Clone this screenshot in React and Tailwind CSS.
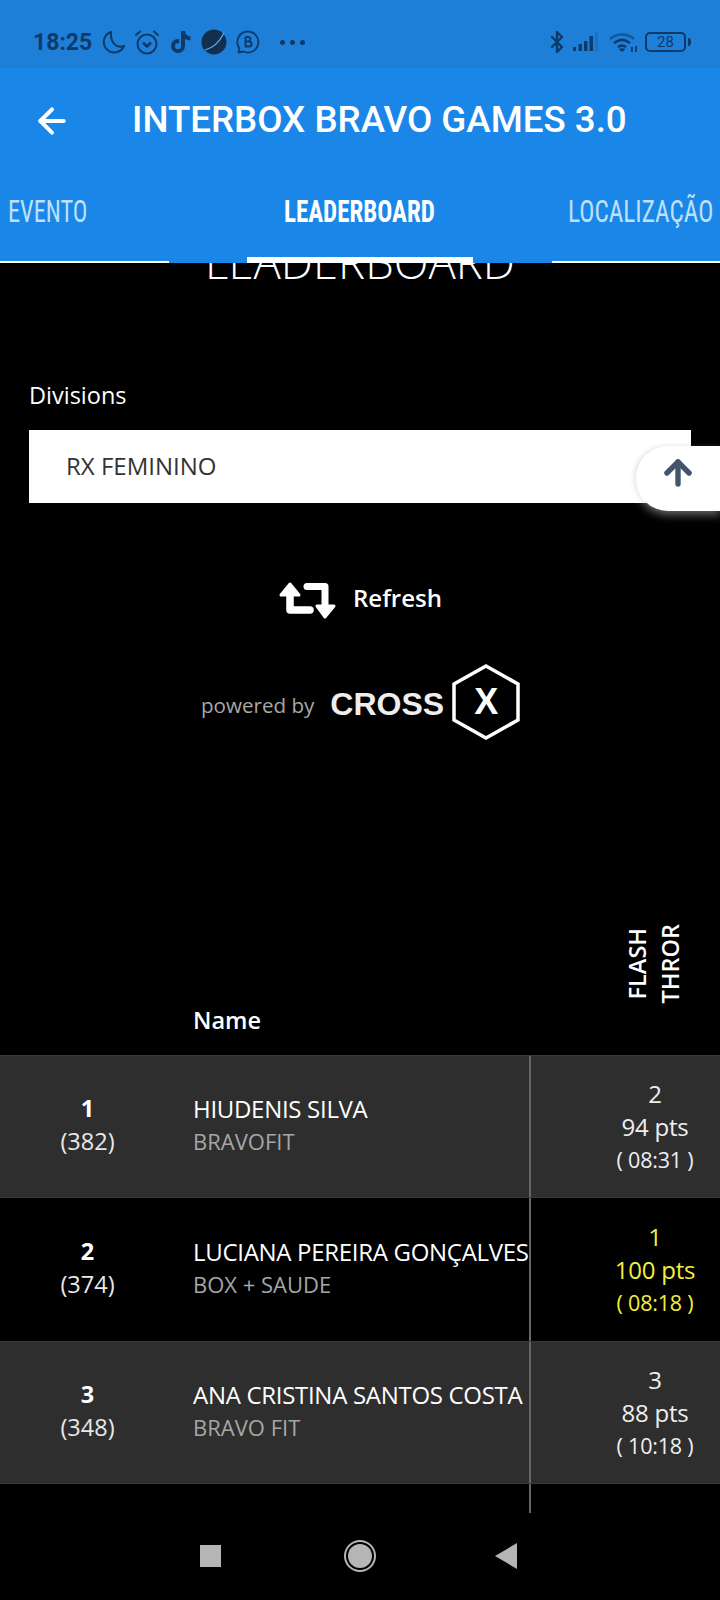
import React from 'react';
import { ArrowLeft, ArrowUp, Bluetooth } from 'lucide-react';

const openSans = { fontFamily: '"Open Sans", sans-serif' };

const rows = [
  { pos: 1, total: '(382)', name: 'HIUDENIS SILVA', box: 'BRAVOFIT', rank: 2, pts: '94 pts', time: '( 08:31 )', shaded: true },
  { pos: 2, total: '(374)', name: 'LUCIANA PEREIRA GONÇALVES', box: 'BOX + SAUDE', rank: 1, pts: '100 pts', time: '( 08:18 )', gold: true },
  { pos: 3, total: '(348)', name: 'ANA CRISTINA SANTOS COSTA', box: 'BRAVO FIT', rank: 3, pts: '88 pts', time: '( 10:18 )', shaded: true },
];

const StatusBar = () => (
  <div className="flex h-[68px] items-center justify-between bg-[#1e7fd9] pl-[33px] pr-[29px] pt-[16px] text-[#0f3a68]">
    <div className="flex items-center">
      <span className="text-[23px] font-bold font-['Roboto',sans-serif] leading-none">18:25</span>
      {/* moon */}
      <svg width="24" height="24" viewBox="0 0 24 24" className="ml-[10px]" fill="none" stroke="currentColor" strokeWidth="2">
        <path d="M9 2a10.5 10.5 0 1 0 13 14c-6 2.5-14-2-13-14z" strokeLinejoin="round" />
      </svg>
      {/* alarm */}
      <svg width="26" height="26" viewBox="0 0 26 26" className="ml-[8px]" fill="none" stroke="currentColor" strokeWidth="2">
        <circle cx="13" cy="15" r="9.5" />
        <path d="M2 6l4-3.5M24 6l-4-3.5" strokeLinecap="round" />
        <path d="M9 13.5l4 4 4-4" strokeWidth="2.6" strokeLinejoin="round" />
      </svg>
      {/* tiktok */}
      <svg width="22" height="24" viewBox="0 0 22 24" className="ml-[10px]" fill="currentColor">
        <path d="M11 1h4c.2 3 2.2 5 5.5 5.5v4c-2.2 0-4-.6-5.5-1.7V16a7 7 0 1 1-7-7h1.2v4.2H8a3 3 0 1 0 3 3z" />
      </svg>
      {/* planet */}
      <svg width="26" height="26" viewBox="0 0 26 26" className="ml-[9px]">
        <circle cx="13" cy="13" r="12.5" fill="#122f4f" />
        <path d="M4 21C12 19 19 12 23 4" stroke="#6ba9e0" strokeWidth="1.2" fill="none" />
      </svg>
      {/* business whatsapp */}
      <svg width="24" height="24" viewBox="0 0 24 24" className="ml-[9px]" fill="none" stroke="currentColor" strokeWidth="1.8">
        <path d="M12 1.5a10.5 10.5 0 1 1-4.6 20L2.5 22.5l1-4.2A10.5 10.5 0 0 1 12 1.5z" strokeLinejoin="round" />
        <path d="M9.5 7v9.5h3.6a2.5 2.5 0 0 0 0-5H9.5m0 0h3.2a2.3 2.3 0 0 0 0-4.5H9.5" strokeWidth="2" />
      </svg>
      <div className="ml-[20px] flex gap-[5px]">
        <span className="h-[5px] w-[5px] rounded-full bg-[#0f3a68]" />
        <span className="h-[5px] w-[5px] rounded-full bg-[#0f3a68]" />
        <span className="h-[5px] w-[5px] rounded-full bg-[#0f3a68]" />
      </div>
    </div>
    <div className="flex items-center">
      <Bluetooth size={24} strokeWidth={2.4} />
      <svg width="28" height="22" viewBox="0 0 28 22" className="ml-[3px]" fill="currentColor">
        <rect x="1" y="16" width="3" height="4" />
        <rect x="6.5" y="13" width="3.5" height="7" />
        <rect x="12" y="10" width="3.5" height="10" />
        <rect x="17.5" y="5" width="3.5" height="15" />
        <rect x="23" y="1" width="3" height="19" opacity="0.2" />
      </svg>
      <svg width="30" height="24" viewBox="0 0 30 24" className="ml-[8px]" fill="none" stroke="currentColor" strokeWidth="2.6">
        <path d="M2 9c7-6 17-6 24 0" opacity="0.6" />
        <path d="M6 13c5-4 11-4 16 0" />
        <path d="M10 17c3-2 5-2 8 0" />
        <path d="M14 22l-3.5-3c2-1 5-1 7 0z" fill="currentColor" stroke="none" />
        <path d="M24 17v5M28 16v6" strokeWidth="1.8" />
      </svg>
      <div className="ml-[7px] flex h-[20px] w-[41px] items-center justify-center rounded-[5px] border-2 border-[#0f3a68] font-['Roboto',sans-serif] text-[15px] leading-none">28</div>
      <div className="ml-[2px] h-[8px] w-[3px] rounded-r-sm bg-[#0f3a68]" />
    </div>
  </div>
);

const Tabs = () => (
  <div className="relative h-[82px] font-['Liberation_Sans_Narrow','Roboto_Condensed',sans-serif] text-[32px] leading-none">
    <span className="absolute left-[8px] top-[14px] origin-left scale-x-[0.76] text-[#bfe0fa]">EVENTO</span>
    <span className="absolute left-[284px] top-[14px] origin-left scale-x-[0.78] font-bold text-white">LEADERBOARD</span>
    <span className="absolute left-[568px] top-[14px] origin-left scale-x-[0.79] whitespace-nowrap text-[#bfe0fa]">LOCALIZAÇÃO</span>
    <div className="absolute bottom-0 left-[247px] h-[6px] w-[226px] bg-white" />
  </div>
);

const Header = () => (
  <div className="bg-[#1a87e8]">
    <div className="flex h-[113px] items-center pb-[8px]">
      <ArrowLeft size={40} strokeWidth={2.4} className="ml-[32px] text-white" />
      <h1 className="ml-[60px] whitespace-nowrap font-['Roboto',sans-serif] text-[36.7px] font-medium leading-none text-white">INTERBOX BRAVO GAMES 3.0</h1>
    </div>
    <Tabs />
  </div>
);

const RefreshIcon = () => (
  <svg width="60" height="40" viewBox="0 0 60 40" fill="none" className="mt-[6px]">
    <path d="M11 12v17h20" stroke="white" strokeWidth="7.5" strokeLinejoin="round" strokeLinecap="round" />
    <path d="M2 14L11 3l9 11z" fill="white" stroke="white" strokeWidth="3" strokeLinejoin="round" />
    <path d="M28 5.5h18V26" stroke="white" strokeWidth="7" strokeLinejoin="round" strokeLinecap="round" />
    <path d="M38 25h17L46 36z" fill="white" stroke="white" strokeWidth="3" strokeLinejoin="round" />
  </svg>
);

const PoweredBy = () => (
  <div className="flex items-center pl-[201px]">
    <span className="translate-y-[4px] text-[20.6px] text-[#a8a8a8]">powered by</span>
    <span className="ml-[16px] translate-y-[2px] font-['Liberation_Sans',sans-serif] text-[32px] font-bold leading-none text-[#eeeeee]">CROSS</span>
    <div className="relative ml-[8px] h-[76px] w-[68px]">
      <svg width="68" height="76" viewBox="0 0 68 76" fill="none">
        <path d="M34 2l32 18v36L34 74 2 56V20z" stroke="white" strokeWidth="3.5" />
      </svg>
      <span className="absolute inset-0 flex items-center justify-center font-['Liberation_Sans',sans-serif] text-[36px] font-bold leading-none text-white">X</span>
    </div>
  </div>
);

const Row = ({ row }) => (
  <div className={`flex h-[143px] ${row.shaded ? 'border-y border-[#383838] bg-[#2e2e2e]' : 'bg-black'}`}>
    <div className="flex w-[175px] shrink-0 flex-col items-center justify-center pb-[2px] text-[23.5px] leading-[33px] text-white">
      <span className="font-bold">{row.pos}</span>
      <span className="text-[#e8e8e8]">{row.total}</span>
    </div>
    <div className="flex w-[354px] shrink-0 flex-col justify-center pb-[2px] pl-[18px]">
      <span className="whitespace-nowrap text-[24px] leading-[33px] tracking-[-0.3px] text-white">{row.name}</span>
      <span className="text-[22px] leading-[33px] text-[#a6a6a6]">{row.box}</span>
    </div>
    <div className={`flex flex-1 border-l-2 border-[#666666] pl-[60px] ${row.gold ? 'text-[#f4ee3c]' : 'text-[#eeeeee]'}`}>
      <div className="flex w-[128px] flex-col items-center justify-center text-[24px] leading-[33px] tracking-[-0.2px]">
        <span>{row.rank}</span>
        <span>{row.pts}</span>
        <span className="text-[21.5px]">{row.time}</span>
      </div>
    </div>
  </div>
);

export default function App() {
  return (
    <div className="relative flex h-[1600px] w-[720px] flex-col overflow-hidden bg-black text-white" style={openSans}>
      <StatusBar />
      <Header />
      {/* thin line either side of the active tab */}
      <div className="relative z-10 -mt-[2px] flex h-[2px] justify-between">
        <div className="w-[169px] bg-white" />
        <div className="w-[168px] bg-white" />
      </div>

      <main className="relative flex-1 overflow-hidden">
        <h2 className="-mt-[24px] text-center text-[45.5px] font-light leading-none text-white">LEADERBOARD</h2>

        <div className="mt-[95px] px-[29px]">
          <label className="block text-[23.5px] leading-[30px]">Divisions</label>
          <div className="mt-[20px] flex h-[73px] items-center bg-white pl-[37px] text-[24px] text-[#333333]">RX FEMININO</div>
        </div>

        <div className="mt-[72px] flex items-center justify-center gap-[14px] pl-[1px]">
          <RefreshIcon />
          <span className="text-[24px] font-semibold leading-none">Refresh</span>
        </div>

        <div className="mt-[43px]"><PoweredBy /></div>

        <div className="mt-[182px] flex h-[133px] items-end pb-[22px] pl-[193px]">
          <span className="w-[431px] text-[23.5px] font-semibold leading-none">Name</span>
          <div className="mb-[29px] flex h-[80px] items-center gap-[6px]">
            <span className="rotate-180 text-[23.5px] font-semibold leading-[27px] [writing-mode:vertical-rl]">FLASH</span>
            <span className="rotate-180 text-[23.5px] font-semibold leading-[27px] [writing-mode:vertical-rl]">THROR</span>
          </div>
        </div>

        <div className="relative">
          {rows.map((row) => <Row key={row.pos} row={row} />)}
          <div className="h-[30px] w-[531px] border-r-2 border-[#666666]" />
        </div>

        {/* scroll to top */}
        <button className="absolute right-0 top-[183px] flex h-[65px] w-[84px] items-start rounded-l-[32px] bg-white pl-[23px] pt-[8px] shadow-[0_4px_8px_rgba(255,255,255,0.4),-2px_0_5px_rgba(0,0,0,0.12)]">
          <ArrowUp size={38} strokeWidth={3.4} className="text-[#44546a]" />
        </button>
      </main>

      {/* android nav */}
      <div className="absolute bottom-0 left-0 flex h-[87px] w-full items-start bg-black pt-[27px]">
        <div className="ml-[200px] mt-[5px] h-[22px] w-[21px] bg-[#b5b5b5]" />
        <div className="ml-[123px] flex h-[32px] w-[32px] items-center justify-center rounded-full border-2 border-[#b5b5b5]">
          <div className="h-[24px] w-[24px] rounded-full bg-[#b5b5b5]" />
        </div>
        <svg width="22" height="26" viewBox="0 0 22 26" className="ml-[119px] mt-[3px]"><path d="M22 0v26L0 13z" fill="#b5b5b5" /></svg>
      </div>
    </div>
  );
}
